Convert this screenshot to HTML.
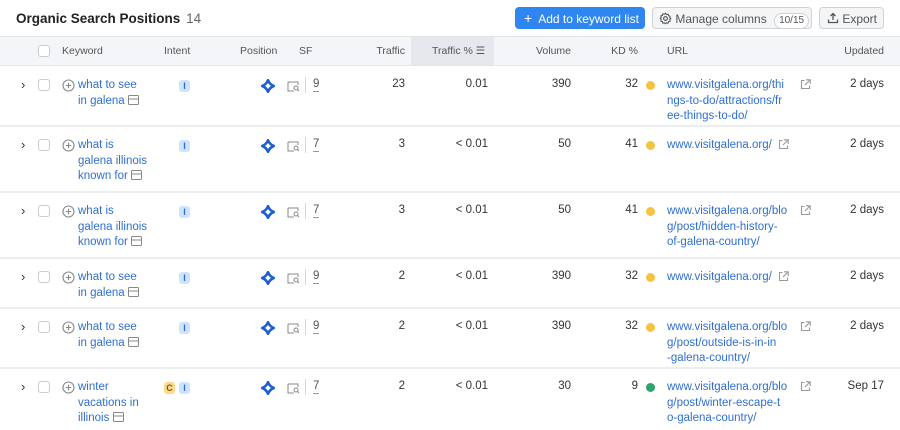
<!DOCTYPE html>
<html><head><meta charset="utf-8"><style>
*{margin:0;padding:0;box-sizing:border-box}
body{width:900px;height:430px;overflow:hidden;background:#fff;font-family:"Liberation Sans",Arial,sans-serif;color:#333;font-size:11.5px;position:relative}
.a{position:absolute;white-space:nowrap}
.r{text-align:right}
.hd{position:absolute;left:0;top:36px;width:900px;height:30px;background:#f4f5f9;border-top:1px solid #e3e5ea;border-bottom:1px solid #e3e5ea}
.hd .a{top:8px;color:#555;font-size:10.5px}
.sep{position:absolute;left:0;width:900px;height:2px;background:#eceef2}
.link{color:#2f6fd1;line-height:15.5px}
.cb{position:absolute;width:12px;height:12px;border:1px solid #c9ccd3;border-radius:3px;background:#fff}
.badge{position:absolute;width:11px;height:12px;border-radius:3px;font-size:9px;font-weight:bold;text-align:center;line-height:12px}
.bi{background:#cfe3fb;color:#2f6fd1}
.bc{background:#fbdc8e;color:#8a5a00}
.dot{position:absolute;width:9px;height:9px;border-radius:50%}
.btn{position:absolute;top:7px;height:22px;border-radius:4px;font-size:12px;line-height:22px}
</style></head><body>
<div class="a" style="left:16px;top:11px;font-size:13.5px;font-weight:bold;color:#222">Organic Search Positions <span style="font-weight:normal;color:#666;margin-left:2px">14</span></div>
<div class="btn" style="left:515px;width:130px;background:#2f86f0;color:#fff;padding-left:9px"><span style="font-size:14px">+</span>&nbsp; Add to keyword list</div>
<div class="btn" style="left:652px;width:160px;background:#f4f5f7;border:1px solid #cfd2d8;color:#555;padding-left:6px">
<svg width="13" height="13" viewBox="0 0 16 16" style="vertical-align:-2px"><circle cx="8" cy="8" r="2.3" fill="none" stroke="#555" stroke-width="1.4"/><path d="M8 1.5l1.2 1.6 2-.4.6 1.9 1.9.6-.4 2L14.5 8l-1.2 1.2.4 2-1.9.6-.6 1.9-2-.4L8 14.5l-1.2-1.2-2 .4-.6-1.9-1.9-.6.4-2L1.5 8l1.2-1.2-.4-2 1.9-.6.6-1.9 2 .4z" fill="none" stroke="#555" stroke-width="1.3"/></svg> Manage columns <span style="display:inline-block;border:1px solid #cfd2d8;border-radius:8px;padding:0 4px;line-height:14px;font-size:10px;margin-left:4px;background:#fff">10/15</span></div>
<div class="btn" style="left:819px;width:65px;background:#f4f5f7;border:1px solid #cfd2d8;color:#555;padding-left:7px">
<svg width="12" height="12" viewBox="0 0 12 12" style="vertical-align:-1px"><path d="M6 8V1.5M3.5 4L6 1.5 8.5 4M1.5 7.5v3h9v-3" fill="none" stroke="#555" stroke-width="1.3"/></svg> Export</div>

<div class="hd">
<div style="position:absolute;left:411px;top:0;width:83px;height:28px;background:#e6e8ee"></div>
<div class="cb" style="left:38px;top:8px"></div>
<div class="a" style="left:62px">Keyword</div>
<div class="a" style="left:164px">Intent</div>
<div class="a" style="left:240px">Position</div>
<div class="a" style="left:299px">SF</div>
<div class="a r" style="right:495px">Traffic</div>
<div class="a" style="left:432px">Traffic % <span style="letter-spacing:-1px">☰</span></div>
<div class="a r" style="right:329px">Volume</div>
<div class="a r" style="right:262px">KD %</div>
<div class="a" style="left:667px">URL</div>
<div class="a r" style="right:16px">Updated</div>
</div>

<div id="rows"></div>
<script>
var rows=[
[66,126,["what to see","in galena"],0,"9","23","0.01","390","32","#f5c342",["www.visitgalena.org/thi","ngs-to-do/attractions/fr","ee-things-to-do/"],"2 days"],
[126,192,["what is","galena illinois","known for"],0,"7","3","< 0.01","50","41","#f5c342",["www.visitgalena.org/"],"2 days"],
[192,258,["what is","galena illinois","known for"],0,"7","3","< 0.01","50","41","#f5c342",["www.visitgalena.org/blo","g/post/hidden-history-","of-galena-country/"],"2 days"],
[258,308,["what to see","in galena"],0,"9","2","< 0.01","390","32","#f5c342",["www.visitgalena.org/"],"2 days"],
[308,368,["what to see","in galena"],0,"9","2","< 0.01","390","32","#f5c342",["www.visitgalena.org/blo","g/post/outside-is-in-in","-galena-country/"],"2 days"],
[368,432,["winter","vacations in","illinois"],1,"7","2","< 0.01","30","9","#2ea36b",["www.visitgalena.org/blo","g/post/winter-escape-t","o-galena-country/"],"Sep 17"]];
var h="";
rows.forEach(function(r){
var t=r[0]+12;
if(r[1]<430)h+='<div class="sep" style="top:'+(r[1]-1)+'px"></div>';
h+='<div class="a" style="left:21px;top:'+(t-1)+'px;font-size:13px;color:#333">›</div>';
h+='<div class="cb" style="left:38px;top:'+(t+1)+'px"></div>';
h+='<svg class="a" style="left:62px;top:'+(t+1)+'px" width="13" height="13" viewBox="0 0 13 13"><circle cx="6.5" cy="6.5" r="5.5" fill="none" stroke="#888" stroke-width="1.1"/><path d="M6.5 3.8v5.4M3.8 6.5h5.4" stroke="#888" stroke-width="1.1"/></svg>';
var kw=r[2].slice();kw[kw.length-1]+=' <svg width="11" height="10" viewBox="0 0 11 10" style="vertical-align:-1px"><rect x=".5" y=".5" width="10" height="9" rx="1" fill="none" stroke="#888"/><path d="M.5 4h10" stroke="#888"/></svg>';
h+='<div class="a link" style="left:78px;top:'+t+'px">'+kw.join('<br>')+'</div>';
if(r[3])h+='<div class="badge bc" style="left:164px;top:'+(t+2)+'px">C</div>';
h+='<div class="badge bi" style="left:179px;top:'+(t+2)+'px">I</div>';
h+='<svg class="a" style="left:261px;top:'+(t+1)+'px" width="14" height="14" viewBox="0 0 14 14"><path d="M7 1.2C8 3.8 10.2 6 12.8 7 10.2 8 8 10.2 7 12.8 6 10.2 3.8 8 1.2 7 3.8 6 6 3.8 7 1.2z" fill="none" stroke="#1f5fd0" stroke-width="2.6" stroke-linejoin="round"/></svg>';
h+='<svg class="a" style="left:287px;top:'+(t+3)+'px" width="13" height="11" viewBox="0 0 13 11"><path d="M1 1h10v3M1 1v9h6" fill="none" stroke="#888"/><circle cx="9" cy="7" r="2" fill="none" stroke="#888"/><path d="M10.5 8.5l1.5 1.5" stroke="#888"/></svg>';
h+='<div class="a" style="left:305px;top:'+(t-1)+'px;width:1px;height:16px;background:#d5d7dc"></div>';
h+='<div class="a" style="left:313px;top:'+t+'px;color:#555;border-bottom:1px dashed #999;line-height:13px">'+r[4]+'</div>';
h+='<div class="a r" style="right:495px;top:'+t+'px">'+r[5]+'</div>';
h+='<div class="a r" style="right:412px;top:'+t+'px">'+r[6]+'</div>';
h+='<div class="a r" style="right:329px;top:'+t+'px">'+r[7]+'</div>';
h+='<div class="a r" style="right:262px;top:'+t+'px">'+r[8]+'</div>';
h+='<div class="dot" style="left:646px;top:'+(t+3)+'px;background:'+r[9]+'"></div>';
h+='<div class="a link" style="left:667px;top:'+t+'px">'+r[10].join('<br>')+'</div>';
var ex=r[10].length>1?800:778;
h+='<svg class="a" style="left:'+ex+'px;top:'+(t+1)+'px" width="11" height="11" viewBox="0 0 11 11"><path d="M4.5 1.5h-3v8h8v-3M6 .8h4.2V5M10 1L5 6" fill="none" stroke="#999" stroke-width="1.1"/></svg>';
h+='<div class="a r" style="right:16px;top:'+t+'px">'+r[11]+'</div>';
});
document.getElementById('rows').innerHTML=h;
</script>
</body></html>
